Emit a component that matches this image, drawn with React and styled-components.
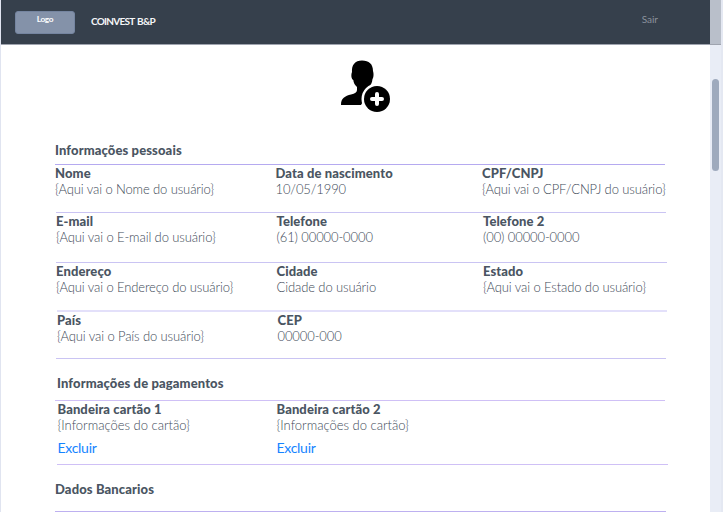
import React from "react";
import styled, { createGlobalStyle } from "styled-components";

const GlobalStyle = createGlobalStyle`
  * { box-sizing: border-box; }
  body { margin: 0; background: #fff; font-family: Lato, sans-serif; color: #4a5562; overflow: hidden; }
`;

const Page = styled.div`
  display: flex;
  width: 723px;
  height: 512px;
  overflow: hidden;
  border-left: 1px solid #e0e4f0;
`;

const Main = styled.main`
  width: 709px;
  height: 512px;
  overflow: hidden;
`;

const Header = styled.header`
  display: flex;
  height: 45px;
  padding-left: 14px;
  background: #36404c;
  border-bottom: 1px solid #9fa4af;
`;

const Logo = styled.div`
  width: 60px;
  height: 23px;
  margin-top: 11px;
  border: 1px solid #7585a0;
  border-radius: 3px;
  background: #8492a9;
  color: #fff;
  font-size: 8.3px;
  font-weight: 700;
  line-height: 15px;
  letter-spacing: -0.4px;
  text-align: center;
`;

const Brand = styled.div`
  margin: 15px 0 0 16px;
  color: #f5f6f8;
  font-size: 10px;
  font-weight: 700;
  line-height: 13px;
  letter-spacing: -0.72px;
  word-spacing: 1px;
`;

const Logout = styled.a`
  margin: 13px 52px 0 auto;
  color: #8b929c;
  font-size: 10px;
  line-height: 13px;
`;

const Avatar = styled.svg`
  display: block;
  width: 52px;
  height: 54px;
  margin: 14px 0 0 339px;
`;

const Title = styled.h2`
  height: ${(p) => p.$height}px;
  margin: ${(p) => p.$top}px 0 0 ${(p) => p.$left - 1}px;
  font-size: 13px;
  font-weight: 900;
  line-height: 16px;
  letter-spacing: 0.12px;
`;

const Row = styled.section`
  display: grid;
  grid-template-columns: 220.5px 206.5px 1fr;
  width: ${(p) => p.$width || 610}px;
  height: ${(p) => p.$height}px;
  margin-left: ${(p) => p.$left - 1}px;
  border-top: ${(p) => p.$line || 1}px solid ${(p) => p.$color || "#cac4f3"};
`;

const Field = styled.div`
  padding-left: ${(p) => p.$indent || 0}px;
  white-space: nowrap;
`;

const Label = styled.div`
  font-size: 13px;
  font-weight: 900;
  line-height: 16px;
  letter-spacing: 0.1px;
`;

const Value = styled.div`
  color: #3e4a58;
  font-size: 13px;
  font-weight: 300;
  line-height: 16px;
  letter-spacing: ${(p) => p.$spacing ?? -0.11}px;
`;

const Remove = styled.a`
  display: block;
  margin-top: 6px;
  color: #1584ff;
  font-size: 14px;
  line-height: 17px;
  letter-spacing: -0.28px;
`;

const Scrollbar = styled.aside`
  width: 11px;
  height: 512px;
  padding: 79px 2px 0;
  background: linear-gradient(#b9bfca 0 44px, #9fa4af 44px 45px, #e9edf6 45px);
`;

const Thumb = styled.div`
  width: 7px;
  height: 92px;
  border-radius: 4px;
  background: #9eaabd;
`;

const Edge = styled.div`
  width: 2px;
  height: 512px;
  background: #e4e8f2;
`;

const rows = [
  { left: 55, height: 48, color: "#b5aaf0", fields: [["Nome", "{Aqui vai o Nome do usuário}"], ["Data de nascimento", "10/05/1990"], ["CPF/CNPJ", "{Aqui vai o CPF/CNPJ do usuário}"]] },
  { left: 56, height: 50, fields: [["E-mail", "{Aqui vai o E-mail do usuário}"], ["Telefone", "(61) 00000-0000"], ["Telefone 2", "(00) 00000-0000"]] },
  { left: 56, height: 48, width: 611, fields: [["Endereço", "{Aqui vai o Endereço do usuário}"], ["Cidade", "Cidade do usuário"], ["Estado", "{Aqui vai o Estado do usuário}"]] },
  { left: 57, height: 48, line: 2, color: "#e3e0fa", fields: [["País", "{Aqui vai o País do usuário}"], ["CEP", "00000-000"]] },
];

export default function App() {
  return (
    <>
      <GlobalStyle />
      <Page>
        <Main>
          <Header>
            <Logo>Logo</Logo>
            <Brand>COINVEST B&amp;P</Brand>
            <Logout>Sair</Logout>
          </Header>
          <Avatar viewBox="0 0 52 54">
            <path d="M1 46C1 39 5 37 11 35.500C15 34.500 17 33.500 17 31V28C15 26 13.500 24 13.300 21C11 20 11 15 12 13C11.500 6 15 1.500 22 1.500C29 1.500 33 5 33 12C34 15 33.500 19 32.500 20C32 24 31 26 28.500 28V33L21 46Z" />
            <circle cx="37" cy="40" r="15.500" fill="#fff" />
            <circle cx="37" cy="40" r="13" />
            <path d="M37 35v10M32 40h10" stroke="#fff" strokeWidth="4" strokeLinecap="round" />
          </Avatar>
          <Title $top={29} $left={55} $height={22}>Informações pessoais</Title>
          {rows.map((row) => (
            <Row key={row.fields[0][0]} $left={row.left} $height={row.height} $width={row.width} $color={row.color} $line={row.line}>
              {row.fields.map(([label, value]) => (
                <Field key={label}>
                  <Label>{label}</Label>
                  <Value>{value}</Value>
                </Field>
              ))}
            </Row>
          ))}
          <Row $left={56} $height={17} />
          <Title $top={0} $left={57} $height={25}>Informações de pagamentos</Title>
          <Row $left={55} $height={64} $color="#cfc0f6">
            <Field $indent={2.5}>
              <Label>Bandeira cartão 1</Label>
              <Value $spacing={0}>{"{Informações do cartão}"}</Value>
              <Remove>Excluir</Remove>
            </Field>
            <Field $indent={1}>
              <Label>Bandeira cartão 2</Label>
              <Value $spacing={0}>{"{Informações do cartão}"}</Value>
              <Remove>Excluir</Remove>
            </Field>
          </Row>
          <Row $left={57} $height={17} $width={611} $color="#cfc0f6" />
          <Title $top={0} $left={55} $height={30}>Dados Bancarios</Title>
          <Row $left={55} $height={1} $width={611} $color="#bdb0f0" />
        </Main>
        <Scrollbar><Thumb /></Scrollbar>
        <Edge />
      </Page>
    </>
  );
}
